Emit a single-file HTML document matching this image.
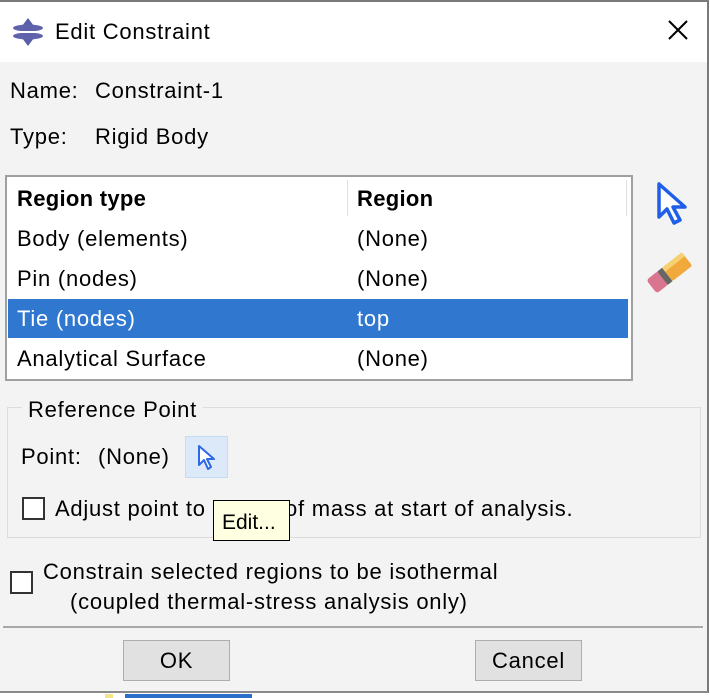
<!DOCTYPE html>
<html><head><meta charset="utf-8"><style>
*{margin:0;padding:0;box-sizing:border-box}
body{width:710px;height:698px;background:#fff;position:relative;overflow:hidden;font-family:"Liberation Sans",sans-serif;font-size:22px;letter-spacing:0.75px;color:#000}
.a{position:absolute;white-space:nowrap;line-height:24px}
#dlg{position:absolute;left:0;top:0;width:709px;height:693px;background:#f3f3f3;border-top:2px solid #7a7a7a;border-right:2px solid #7a7a7a;border-bottom:2px solid #8a8a8a}
#title{position:absolute;left:0;top:0;width:707px;height:60px;background:#fff}
.cb{position:absolute;width:23px;height:23px;border:2px solid #333;background:#fff}
.btn{position:absolute;height:41px;width:107px;border:1px solid #adadad;background:#e1e1e1;text-align:center;line-height:39px}
</style></head><body>
<div id="dlg">
 <div id="title"></div>
</div>
<svg style="position:absolute;left:12px;top:17px" width="32" height="30" viewBox="0 0 32 30">
 <path d="M16 1 L22 9 H10 Z" fill="#5a5fa8"/>
 <path d="M16 29 L22 21 H10 Z" fill="#5a5fa8"/>
 <ellipse cx="16" cy="11" rx="15" ry="3.5" fill="#5d62aa"/>
 <ellipse cx="16" cy="19" rx="15" ry="3.5" fill="#5d62aa"/>
 <rect x="1" y="14" width="30" height="2" fill="#fff"/>
</svg>
<div class="a" style="left:55px;top:20px">Edit Constraint</div>
<svg style="position:absolute;left:667px;top:19px" width="22" height="22"><path d="M2 2L20 20M20 2L2 20" stroke="#000" stroke-width="2"/></svg>

<div class="a" style="left:10px;top:79px">Name:</div>
<div class="a" style="left:95px;top:79px">Constraint-1</div>
<div class="a" style="left:10px;top:125px">Type:</div>
<div class="a" style="left:95px;top:125px">Rigid Body</div>

<div style="position:absolute;left:5px;top:175px;width:628px;height:206px;background:#fff;border:2px solid #a0a0a0"></div>
<div style="position:absolute;left:347px;top:180px;width:1px;height:36px;background:#e0e0e0"></div>
<div style="position:absolute;left:626px;top:180px;width:1px;height:36px;background:#e0e0e0"></div>
<div class="a" style="left:17px;top:187px;font-weight:bold;letter-spacing:0.3px">Region type</div>
<div class="a" style="left:357px;top:187px;font-weight:bold;letter-spacing:0.3px">Region</div>
<div class="a" style="left:17px;top:227px">Body (elements)</div>
<div class="a" style="left:357px;top:227px">(None)</div>
<div class="a" style="left:17px;top:267px">Pin (nodes)</div>
<div class="a" style="left:357px;top:267px">(None)</div>
<div style="position:absolute;left:8px;top:299px;width:620px;height:39px;background:#3077d0"></div>
<div class="a" style="left:17px;top:307px;color:#fff">Tie (nodes)</div>
<div class="a" style="left:357px;top:307px;color:#fff">top</div>
<div class="a" style="left:17px;top:347px">Analytical Surface</div>
<div class="a" style="left:357px;top:347px">(None)</div>

<svg style="position:absolute;left:655px;top:181px" width="36" height="46" viewBox="0 0 36 46">
 <path d="M4 3 L4 36 L12 28 L19 42 L25 39 L18 26 L30 26 Z" fill="#fff" stroke="#1f5fe8" stroke-width="3.5" stroke-linejoin="round"/>
</svg>
<svg style="position:absolute;left:646px;top:250px" width="48" height="46" viewBox="0 0 48 46">
 <g transform="rotate(-38 24 23)">
  <rect x="1" y="14" width="15" height="17" rx="3" fill="#d9758f"/>
  <rect x="15" y="14" width="6" height="17" fill="#666"/>
  <rect x="21" y="14" width="25" height="17" rx="2" fill="#f2a93c"/>
  <rect x="21" y="14" width="25" height="5" fill="#f7d070"/>
 </g>
</svg>

<div style="position:absolute;left:7px;top:407px;width:694px;height:131px;border:1px solid #dcdcdc"></div>
<div class="a" style="left:22px;top:398px;padding:0 6px;background:#f3f3f3">Reference Point</div>
<div class="a" style="left:21px;top:445px">Point:</div>
<div class="a" style="left:98px;top:445px">(None)</div>
<div style="position:absolute;left:185px;top:436px;width:43px;height:42px;background:#dbe9f9;border:1px solid #c6dcf5"></div>
<svg style="position:absolute;left:196px;top:444px" width="22" height="28" viewBox="0 0 22 28">
 <path d="M3 2 L3 21 L8 16 L12 25 L15 23 L11 15 L18 15 Z" fill="#fff" stroke="#2d68e6" stroke-width="2" stroke-linejoin="round"/>
</svg>
<div class="cb" style="left:22px;top:497px"></div>
<div class="a" style="left:55px;top:497px">Adjust point to center of mass at start of analysis.</div>
<div style="position:absolute;left:213px;top:500px;width:77px;height:41px;background:#ffffe1;border:1px solid #000"></div>
<div class="a" style="left:222px;top:511px;font-size:21px;letter-spacing:0">Edit...</div>

<div class="cb" style="left:10px;top:571px"></div>
<div class="a" style="left:43px;top:560px">Constrain selected regions to be isothermal</div>
<div class="a" style="left:70px;top:590px">(coupled thermal-stress analysis only)</div>

<div style="position:absolute;left:3px;top:626px;width:700px;height:2px;background:#a8a8a8"></div>
<div class="btn" style="left:123px;top:640px">OK</div>
<div class="btn" style="left:475px;top:640px">Cancel</div>

<div style="position:absolute;left:125px;top:694px;width:127px;height:4px;background:#2c6fc9"></div>
<div style="position:absolute;left:105px;top:694px;width:8px;height:4px;background:#f3e68a"></div>
</body></html>
